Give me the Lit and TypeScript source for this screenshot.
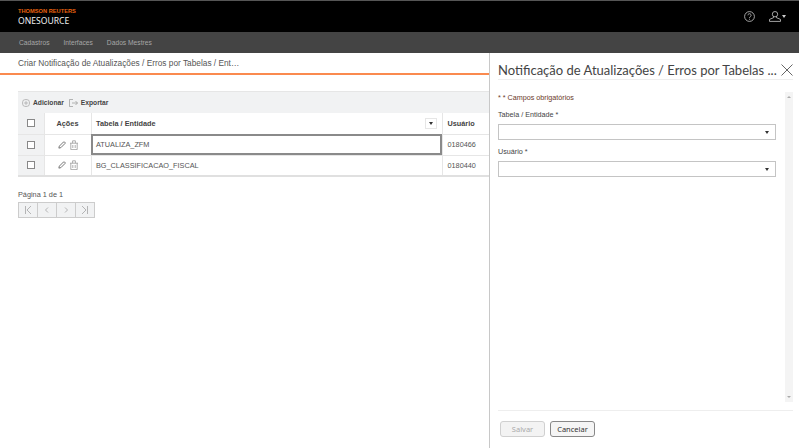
import {LitElement, css, html, svg} from "lit";
import {customElement} from "lit/decorators.js";

const rows = [
  {name: "ATUALIZA_ZFM", user: "0180466", focused: true},
  {name: "BG_CLASSIFICACAO_FISCAL", user: "0180440", focused: false},
];

const pencil = html`<svg class="ico" width="8" height="8" viewBox="0 0 9 9" fill="none" stroke="#666" stroke-width="1">
  <path d="M1 8l.5-2.2L6.2 1.1a.8.8 0 0 1 1.1 0l.6.6a.8.8 0 0 1 0 1.1L3.2 7.5z" />
</svg>`;

const trash = html`<svg class="ico" width="8" height="10" viewBox="0 0 8 10" fill="none" stroke="#999" stroke-width="0.8">
  <path d="M0 3.2h8M2.6 3.2V.8h2.8v2.4M.8 3.2v6.4h6.4V3.2M2.8 5v3M5.2 5v3" />
</svg>`;

const chevrons = [
  svg`<path d="M2.5 1v8M8 1L4 5l4 4" />`,
  svg`<path d="M6 2.5L3.5 5 6 7.5" />`,
  svg`<path d="M4 2.5L6.5 5 4 7.5" />`,
  svg`<path d="M7.5 1v8M2 1l4 4-4 4" />`,
];

@customElement("app-root")
export class AppRoot extends LitElement {
  static override styles = css`
    :host {
      display: block;
      width: 799px;
      height: 448px;
      overflow: hidden;
      font-family: "Liberation Sans", Arial, sans-serif;
      background: #fff;
      color: #555;
    }
    .top {
      height: 32px;
      box-sizing: border-box;
      background: #000;
      border-top: 1px solid #555;
      display: flex;
      align-items: center;
      justify-content: space-between;
      padding: 0 13px 0 18px;
    }
    .brand {
      display: flex;
      flex-direction: column;
      gap: 1px;
    }
    .brand b {
      color: #e8620f;
      font-size: 5.7px;
      line-height: 7px;
    }
    .brand span {
      color: #f0f0f0;
      font: 8.6px/10px "Noto Sans", sans-serif;
    }
    .top-icons {
      display: flex;
      align-items: center;
      gap: 14px;
    }
    .user {
      display: flex;
      align-items: center;
      gap: 1px;
    }
    .nav {
      height: 21px;
      background: #444;
      display: flex;
      align-items: center;
      gap: 14px;
      padding-left: 19px;
      color: #a6a6a6;
      font-size: 6.7px;
    }
    .body {
      display: flex;
      height: 395px;
    }
    .main {
      width: 489px;
      flex: none;
      overflow: hidden;
    }
    .crumb {
      height: 20px;
      border-bottom: 2px solid #fa8a4f;
      padding-left: 18px;
      font-size: 8.3px;
      line-height: 20px;
      color: #555;
    }
    .content {
      padding: 16px 0 0 18px;
    }
    .toolbar {
      width: 490px;
      height: 22px;
      box-sizing: border-box;
      background: #f1f2f3;
      border-top: 1px solid #e6e6e6;
      display: flex;
      align-items: center;
      gap: 5px;
      padding-left: 4px;
      font-size: 6.7px;
      font-weight: bold;
      color: #444;
    }
    .tool {
      display: flex;
      align-items: center;
      gap: 3px;
    }
    table {
      border-collapse: collapse;
      table-layout: fixed;
      width: 490px;
      border-bottom: 2px solid #e0e0e0;
      font-size: 7.3px;
    }
    td,
    th {
      height: 21px;
      padding: 0;
      box-sizing: border-box;
      border-bottom: 1px solid #e6e6e6;
      border-right: 1px solid #e6e6e6;
      text-align: left;
    }
    th {
      font-weight: bold;
      color: #444;
      background: #fff;
    }
    .check-cell {
      width: 26px;
      background: #f1f2f3;
      text-align: center;
    }
    .box {
      display: block;
      margin: auto;
      width: 6px;
      height: 6px;
      background: #fff;
      border: 1px solid #888;
    }
    .actions {
      width: 47px;
      text-align: center;
    }
    .actions .ico + .ico {
      margin-left: 4px;
    }
    .ico {
      vertical-align: middle;
    }
    .name {
      width: 351px;
      padding-left: 4.5px;
    }
    .head-name {
      display: flex;
      align-items: center;
      justify-content: space-between;
      padding-right: 5px;
    }
    .sort {
      width: 12px;
      height: 11px;
      box-sizing: border-box;
      border: 1px solid #e6e6e6;
      display: flex;
      align-items: center;
      justify-content: center;
    }
    .caret {
      width: 0;
      height: 0;
      border-left: 2.5px solid transparent;
      border-right: 2.5px solid transparent;
      border-top: 3px solid #333;
    }
    .user-col {
      padding-left: 5px;
    }
    td.focused {
      outline: 2px solid #8a8a8a;
      outline-offset: -2px;
    }
    .pager {
      margin-top: 13px;
      font-size: 7.3px;
      color: #555;
    }
    .pager-btns {
      display: flex;
      width: 77px;
      height: 16px;
      margin-top: 3px;
      box-sizing: border-box;
      border: 1px solid #ccc;
      background: #f1f2f3;
    }
    .pager-btns span {
      flex: 1;
      display: flex;
      align-items: center;
      justify-content: center;
      border-right: 1px solid #ccc;
    }
    .pager-btns span:last-child {
      border-right: none;
    }
    .panel {
      flex: 1;
      min-width: 0;
      box-sizing: border-box;
      border-left: 1px solid #c8c8c8;
      padding: 0 6px 0 8px;
      display: flex;
      flex-direction: column;
    }
    .panel-head {
      height: 27px;
      padding-top: 7px;
      box-sizing: border-box;
      border-bottom: 1px solid #eee;
      display: flex;
      align-items: center;
      justify-content: space-between;
      font: 13px Lato, sans-serif;
      color: #444;
      white-space: nowrap;
    }
    .panel-body {
      flex: 1;
      display: flex;
      justify-content: space-between;
      padding-top: 13px;
      min-height: 0;
    }
    .form {
      width: 278px;
      font-size: 7.2px;
      color: #555;
    }
    .required {
      line-height: 9px;
      color: #6b3a2a;
    }
    .form label {
      display: block;
      margin-top: 8px;
      line-height: 9px;
      color: #444;
    }
    .form .select + label {
      margin-top: 7px;
    }
    .select {
      height: 16px;
      margin-top: 5px;
      box-sizing: border-box;
      border: 1px solid #c4c4c4;
      display: flex;
      align-items: center;
      justify-content: flex-end;
      padding-right: 6px;
    }
    .scroll {
      width: 8px;
      height: 310px;
      margin-top: -1px;
      background: #f4f4f4;
      display: flex;
      flex-direction: column;
      align-items: center;
      justify-content: space-between;
      padding: 4px 0;
      box-sizing: border-box;
    }
    .scroll i {
      width: 0;
      height: 0;
      border-left: 2px solid transparent;
      border-right: 2px solid transparent;
    }
    .up {
      border-bottom: 2px solid #aaa;
    }
    .down {
      border-top: 2px solid #aaa;
    }
    .panel-foot {
      height: 38px;
      flex: none;
      box-sizing: border-box;
      border-top: 1px solid #eee;
      display: flex;
      align-items: flex-start;
      gap: 5px;
      padding: 10px 0 0 2px;
    }
    button {
      height: 16px;
      padding: 0;
      border-radius: 3px;
      font: 7.5px "Noto Sans", sans-serif;
      box-sizing: border-box;
    }
    .save {
      width: 45px;
      background: #f3f3f3;
      border: 1px solid #d0d0d0;
      color: #aaa;
    }
    .cancel {
      width: 45px;
      background: #f5f5f5;
      border: 1px solid #888;
      color: #333;
    }
  `;

  override render() {
    return html`
      <div class="top">
        <div class="brand">
          <b>THOMSON REUTERS</b>
          <span>ONESOURCE</span>
        </div>
        <div class="top-icons">
          <svg width="11" height="11" viewBox="0 0 11 11" fill="none" stroke="#ccc" stroke-width="0.8">
            <circle cx="5.5" cy="5.5" r="4.9" />
            <path d="M3.9 4.3a1.6 1.6 0 1 1 2.4 1.4c-.5.3-.8.6-.8 1.2M5.5 7.8v.9" />
          </svg>
          <div class="user">
            <svg width="12" height="11" viewBox="0 0 12 11" fill="none" stroke="#ccc" stroke-width="0.8">
              <circle cx="6" cy="3.2" r="2.7" />
              <path d="M4.5 5.6v1.1L.5 8.4v2h11V8.4L7.5 6.7V5.6" />
            </svg>
            <span class="caret" style="border-top-color:#ccc"></span>
          </div>
        </div>
      </div>
      <div class="nav">
        <span>Cadastros</span><span>Interfaces</span><span>Dados Mestres</span>
      </div>
      <div class="body">
        <div class="main">
          <div class="crumb">Criar Notificação de Atualizações / Erros por Tabelas / Ent…</div>
          <div class="content">
            <div class="toolbar">
              <span class="tool">
                <svg width="8" height="8" viewBox="0 0 16 16" fill="none" stroke="#888" stroke-width="1">
                  <circle cx="8" cy="8" r="7.4" /><path d="M8 3.5v9M3.5 8h9" />
                </svg>
                Adicionar
              </span>
              <span class="tool">
                <svg width="9" height="8" viewBox="0 0 9 8" fill="none" stroke="#888" stroke-width="0.6">
                  <path d="M4 .5H.5v7H4M3 4h5.5M6.5 2l2 2-2 2" />
                </svg>
                Exportar
              </span>
            </div>
            <table>
              <thead>
                <tr>
                  <th class="check-cell"><span class="box"></span></th>
                  <th class="actions">Ações</th>
                  <th class="name">
                    <div class="head-name">
                      Tabela / Entidade
                      <span class="sort"><span class="caret"></span></span>
                    </div>
                  </th>
                  <th class="user-col">Usuário</th>
                </tr>
              </thead>
              <tbody>
                ${rows.map(
                  (r) => html`
                    <tr>
                      <td class="check-cell"><span class="box"></span></td>
                      <td class="actions">${pencil}${trash}</td>
                      <td class="name ${r.focused ? "focused" : ""}">${r.name}</td>
                      <td class="user-col">${r.user}</td>
                    </tr>
                  `
                )}
              </tbody>
            </table>
            <div class="pager">
              Página 1 de 1
              <div class="pager-btns">
                ${chevrons.map(
                  (c) => html`<span>
                    <svg width="10" height="10" viewBox="0 0 10 10" fill="none" stroke="#999" stroke-width="0.7">${c}</svg>
                  </span>`
                )}
              </div>
            </div>
          </div>
        </div>
        <div class="panel">
          <div class="panel-head">
            <span>Notificação de Atualizações / Erros por Tabelas ...</span>
            <svg width="12" height="12" viewBox="0 0 12 12" fill="none" stroke="#555" stroke-width="0.9">
              <path d="M.5.5l11 11M11.5.5l-11 11" />
            </svg>
          </div>
          <div class="panel-body">
            <div class="form">
              <div class="required">* * Campos obrigatórios</div>
              <label>Tabela / Entidade *</label>
              <div class="select"><span class="caret"></span></div>
              <label>Usuário *</label>
              <div class="select"><span class="caret"></span></div>
            </div>
            <div class="scroll"><i class="up"></i><i class="down"></i></div>
          </div>
          <div class="panel-foot">
            <button class="save">Salvar</button>
            <button class="cancel">Cancelar</button>
          </div>
        </div>
      </div>
    `;
  }
}
